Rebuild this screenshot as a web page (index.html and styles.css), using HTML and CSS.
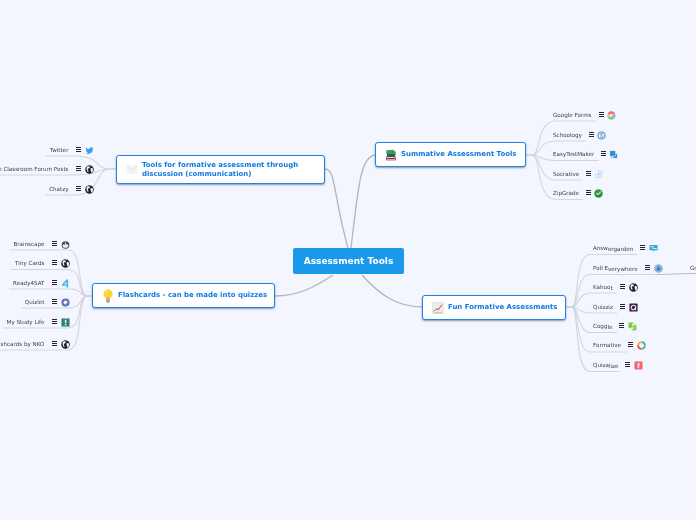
FILE: index.html
```html
<!DOCTYPE html>
<html lang="en">
<head>
<meta charset="utf-8">
<title>Assessment Tools</title>
<link rel="stylesheet" href="styles.css">
</head>
<body>
<svg class="defs" width="0" height="0" aria-hidden="true">
  <symbol id="i-globe" viewBox="0 0 20 20">
    <circle cx="10" cy="10" r="9.500" fill="#1d1d22"/>
    <path d="M5 3c3-1 5 0 6 1l-1 3-3 1-1 3 2 2-1 3-2-2-2-5zM12 8l4-2 2 4-1 5-3 2-1-4zM11 1l3 1-2 1z" fill="#f2f2f2"/>
  </symbol>
  <symbol id="i-twitter" viewBox="0 0 20 20">
    <path d="M19 4.500c-.7.3-1.400.5-2.100.6.8-.5 1.300-1.200 1.600-2-.7.4-1.500.7-2.300.9A3.700 3.700 0 0 0 9.900 7.300C6.900 7.200 4.200 5.700 2.400 3.500c-1 1.700-.5 3.800 1.100 4.900-.6 0-1.200-.2-1.700-.5 0 1.800 1.300 3.300 3 3.700-.5.100-1.100.200-1.700.100.500 1.500 1.900 2.500 3.500 2.600A7.500 7.500 0 0 1 1 15.800 10.600 10.600 0 0 0 17.300 6.400c.7-.5 1.300-1.100 1.700-1.900z" fill="#2aa3ef"/>
  </symbol>
  <symbol id="i-brain" viewBox="0 0 20 20">
    <circle cx="10" cy="11" r="8.500" fill="#3d4450"/>
    <path d="M3 12l3-3 2 2 2-7 2 7 2-2 3 3-3 5H6z" fill="#e8eef5"/>
    <path d="M10 1l2 6h-4z" fill="#5cb4ea"/>
  </symbol>
  <symbol id="i-four" viewBox="0 0 20 20">
    <path d="M12 1h4v18h-4v-4H2v-3z" fill="#4cb6ea"/>
    <path d="M12 6l-5 6h5z" fill="#f3f6ff"/>
  </symbol>
  <symbol id="i-quizlet" viewBox="0 0 20 20">
    <circle cx="10" cy="10" r="9" fill="#5a70c4"/>
    <circle cx="10" cy="10" r="4.500" fill="#eef0fb"/>
    <path d="M11 12l5 5 2-2-4-4z" fill="#5a70c4"/>
  </symbol>
  <symbol id="i-study" viewBox="0 0 20 20">
    <rect x="1" y="1" width="18" height="18" fill="#27886e"/>
    <rect x="8.500" y="4" width="3.500" height="7" fill="#f4f4ea"/>
    <rect x="8.500" y="13" width="3.500" height="3.500" fill="#f4f4ea"/>
  </symbol>
  <symbol id="i-google" viewBox="0 0 20 20">
    <g fill="none" stroke-width="5">
      <circle cx="10" cy="10" r="6.500" stroke="#eeb0a8"/>
      <path d="M4 7a6.500 6.500 0 0 1 11-1.500" stroke="#ea6f60"/>
      <path d="M4 7a6.500 6.500 0 0 0 0 6" stroke="#f5cc5e"/>
      <path d="M4 13a6.500 6.500 0 0 0 10 2" stroke="#7cc48a"/>
      <path d="M14 15a6.500 6.500 0 0 0 2.500-5H10" stroke="#96b9f0"/>
    </g>
  </symbol>
  <symbol id="i-school" viewBox="0 0 20 20">
    <circle cx="10" cy="10" r="9" fill="#3f9ee0"/>
    <circle cx="10" cy="10" r="6.500" fill="#e9f1fa"/>
    <path d="M13 7c-1-1.500-5-1.500-5.500.5S13 10.500 12.500 12.500 8 14.500 7 13" fill="none" stroke="#5a6b7c" stroke-width="1.800"/>
  </symbol>
  <symbol id="i-easy" viewBox="0 0 20 20">
    <rect x="2" y="2" width="12" height="11" fill="#2d8fd5"/>
    <rect x="10" y="9" width="8" height="9" fill="#2d8fd5"/>
    <rect x="12" y="11" width="3" height="3" fill="#dcecf9"/>
    <rect x="4" y="14" width="4" height="4" fill="#79bde9"/>
  </symbol>
  <symbol id="i-socrative" viewBox="0 0 20 20">
    <g fill="none" stroke="#a5cdef" stroke-width="1.500">
      <rect x="3" y="9" width="7" height="8" rx="2"/>
      <rect x="10" y="9" width="7" height="8" rx="2"/>
      <rect x="9" y="2" width="8" height="7" rx="2"/>
    </g>
  </symbol>
  <symbol id="i-zip" viewBox="0 0 20 20">
    <circle cx="10" cy="10" r="9.500" fill="#2e9d3a"/>
    <path d="M3 14a9 9 0 0 0 14 0z" fill="#1f6f2a" opacity=".55"/>
    <path d="M5 10l4 4 7-8-1.500-1L9 11 6.500 8.500z" fill="#f3fbf3"/>
  </symbol>
  <symbol id="i-answer" viewBox="0 0 20 20">
    <path d="M1 2h18v12H12l-3 4v-4H1z" fill="#3da3d8"/>
    <path d="M3 5h8v2H3zM8 9h9v2H8z" fill="#d7effa"/>
  </symbol>
  <symbol id="i-poll" viewBox="0 0 20 20">
    <circle cx="10" cy="10" r="9.500" fill="#8fb3e0"/>
    <path d="M10 4l5 10H5z" fill="#3a76c0"/>
  </symbol>
  <symbol id="i-quizziz" viewBox="0 0 20 20">
    <rect x="1" y="1" width="18" height="18" rx="1.500" fill="#3a1d4a"/>
    <circle cx="10" cy="10" r="5" fill="none" stroke="#e8e0ec" stroke-width="2.500"/>
    <path d="M11 11l5 5" stroke="#e8e0ec" stroke-width="2"/>
  </symbol>
  <symbol id="i-coggle" viewBox="0 0 20 20">
    <rect x="1" y="1" width="18" height="18" fill="#f1f8ea"/>
    <path d="M1 1h12L8 6l3 3-6 6-4-3z" fill="#7ec850"/>
    <path d="M19 19H7l5-5-3-3 6-6 4 3z" fill="#8ed25f"/>
  </symbol>
  <symbol id="i-formative" viewBox="0 0 20 20">
    <circle cx="10" cy="10" r="7.500" fill="none" stroke="#e4553f" stroke-width="4" stroke-dasharray="12 36" stroke-dashoffset="36"/>
    <circle cx="10" cy="10" r="7.500" fill="none" stroke="#f2b233" stroke-width="4" stroke-dasharray="12 36" stroke-dashoffset="24"/>
    <circle cx="10" cy="10" r="7.500" fill="none" stroke="#3f9fd8" stroke-width="4" stroke-dasharray="12 36" stroke-dashoffset="12"/>
    <circle cx="10" cy="10" r="7.500" fill="none" stroke="#58b368" stroke-width="4" stroke-dasharray="12 36"/>
  </symbol>
  <symbol id="i-quizalize" viewBox="0 0 20 20">
    <rect x="1" y="1" width="18" height="18" rx="1" fill="#f4646a"/>
    <path d="M8 5h5v3h-2v2h2v2h-2v4H8z" fill="#fbe3e3"/>
  </symbol>
</svg>

<main class="canvas">
  <svg class="links" width="696" height="520" viewBox="0 0 696 520" aria-hidden="true">
    <g class="main-links">
      <path d="M325 169C336 169 333 195 348 248"/>
      <path d="M351 248C358 190 360 155 376 155"/>
      <path d="M333 275C315 287 298 296 275 296"/>
      <path d="M362 275C380 295 397 307 423 307"/>
    </g>
    <g class="sub-links">
      <path d="M526 155H532C541 155 536 121 556 121H596"/>
      <path d="M526 155H532C541 155 538 141 556 141H586"/>
      <path d="M526 155H532C541 155 538 160.500 556 160.500H599"/>
      <path d="M526 155H532C541 155 538 180 556 180H583"/>
      <path d="M526 155H532C541 155 536 199.500 556 199.500H583"/>

      <path d="M566 307H572C579 307 574 254.500 590 254.500H637"/>
      <path d="M566 307H572C579 307 576 274.500 590 274.500H655"/>
      <path d="M566 307H572C579 307 578 293 590 293H617"/>
      <path d="M566 307H572C579 307 578 313 590 313H617"/>
      <path d="M566 307H572C579 307 578 332.500 590 332.500H617"/>
      <path d="M566 307H572C579 307 576 352 590 352H627"/>
      <path d="M566 307H572C579 307 574 371.500 590 371.500H620"/>

      <path d="M116 169H110C94 169 102 156 74 156H45"/>
      <path d="M116 169H110C94 169 100 175 74 175H0"/>
      <path d="M116 169H110C94 169 102 195 74 195H45"/>

      <path d="M92 296H88C76 296 84 250 68 250H10"/>
      <path d="M92 296H88C76 296 84 269.500 68 269.500H11"/>
      <path d="M92 296H88C78 296 84 289 68 289H9"/>
      <path d="M92 296H88C78 296 84 308 68 308H21"/>
      <path d="M92 296H88C76 296 84 328 68 328H3"/>
      <path d="M92 296H88C76 296 84 350 68 350H0"/>
    </g>
    <path class="far-link" d="M655 274.500C670 274.500 675 273.500 696 273.500"/>
  </svg>

  <h1 class="node root">Assessment Tools</h1>

  <div class="node topic topic-tools">
    <svg class="topic-icon" viewBox="0 0 20 16"><rect width="20" height="16" fill="#f4f4f2"/><path d="M0 0l10 9 10-9v2L10 11 0 2z" fill="#e4e4e2"/></svg>
    <span>Tools for formative assessment through discussion (communication)</span>
  </div>
  <div class="node topic topic-flash">
    <svg class="topic-icon" viewBox="0 0 16 20"><circle cx="8" cy="7" r="6.500" fill="#fbd436"/><path d="M4 3a5 5 0 0 1 5-1.500C6 2 5 4 4.500 6z" fill="#fff5b5"/><path d="M5 12h6v3H5z" fill="#f2b21f"/><path d="M5.500 15h5v3l-1 1.500h-3l-1-1.500z" fill="#9aa0a6"/></svg>
    <span>Flashcards - can be made into quizzes</span>
  </div>
  <div class="node topic topic-sum">
    <svg class="topic-icon" viewBox="0 0 18 18"><path d="M2 11h14v6H2z" fill="#8a2b3a"/><path d="M3 12h12v1.500H3zM3 15h12v1H3z" fill="#e8d9cf"/><path d="M3 7h12v5H3z" fill="#3d4f8a"/><path d="M2 2l10-1 4 3v4H5L2 6z" fill="#3aa04a"/><path d="M2 6l3 2h11v1H5L2 7z" fill="#1d6a38"/></svg>
    <span>Summative Assessment Tools</span>
  </div>
  <div class="node topic topic-fun">
    <svg class="topic-icon" viewBox="0 0 18 18"><rect x=".5" y=".5" width="17" height="17" rx="1.500" fill="#ececec" stroke="#d8d8d8"/><path d="M3 14l4-4 2 2 6-8" fill="none" stroke="#c8453c" stroke-width="1.500"/><path d="M3 16h12" stroke="#aaa"/></svg>
    <span>Fun Formative Assessments</span>
  </div>

  <div class="leaf l-twitter left-tools"><span class="txt">Twitter</span><i class="menu"></i><svg class="ico"><use href="#i-twitter"/></svg></div>
  <div class="leaf l-classroom left-tools"><span class="txt">Google Classroom Forum Posts</span><i class="menu"></i><svg class="ico"><use href="#i-globe"/></svg></div>
  <div class="leaf l-chatzy left-tools"><span class="txt">Chatzy</span><i class="menu"></i><svg class="ico"><use href="#i-globe"/></svg></div>

  <div class="leaf l-brain left-flash"><span class="txt">Brainscape</span><i class="menu"></i><svg class="ico"><use href="#i-brain"/></svg></div>
  <div class="leaf l-tiny left-flash"><span class="txt">Tiny Cards</span><i class="menu"></i><svg class="ico"><use href="#i-globe"/></svg></div>
  <div class="leaf l-ready left-flash"><span class="txt">Ready4SAT</span><i class="menu"></i><svg class="ico"><use href="#i-four"/></svg></div>
  <div class="leaf l-quizlet left-flash"><span class="txt">Quizlet</span><i class="menu"></i><svg class="ico"><use href="#i-quizlet"/></svg></div>
  <div class="leaf l-study left-flash"><span class="txt">My Study Life</span><i class="menu"></i><svg class="ico"><use href="#i-study"/></svg></div>
  <div class="leaf l-nko left-flash"><span class="txt">Flashcards by NKO</span><i class="menu"></i><svg class="ico"><use href="#i-globe"/></svg></div>

  <div class="leaf l-gforms"><span class="txt">Google Forms</span><i class="menu"></i><svg class="ico"><use href="#i-google"/></svg></div>
  <div class="leaf l-schoology"><span class="txt">Schoology</span><i class="menu"></i><svg class="ico"><use href="#i-school"/></svg></div>
  <div class="leaf l-easy"><span class="txt">EasyTestMaker</span><i class="menu"></i><svg class="ico"><use href="#i-easy"/></svg></div>
  <div class="leaf l-socrative"><span class="txt">Socrative</span><i class="menu"></i><svg class="ico"><use href="#i-socrative"/></svg></div>
  <div class="leaf l-zip"><span class="txt">ZipGrade</span><i class="menu"></i><svg class="ico"><use href="#i-zip"/></svg></div>

  <div class="leaf l-answer"><span class="txt">Answ<b class="low">ergarden</b></span><i class="menu"></i><svg class="ico"><use href="#i-answer"/></svg></div>
  <div class="leaf l-poll"><span class="txt">Poll E<b class="low">verywhere</b></span><i class="menu"></i><svg class="ico"><use href="#i-poll"/></svg></div>
  <div class="leaf l-kahoot"><span class="txt">Kahoo<b class="low">t</b></span><i class="menu"></i><svg class="ico"><use href="#i-globe"/></svg></div>
  <div class="leaf l-quizziz"><span class="txt">Quizziz</span><i class="menu"></i><svg class="ico"><use href="#i-quizziz"/></svg></div>
  <div class="leaf l-coggle"><span class="txt">Cogg<b class="low">le</b></span><i class="menu"></i><svg class="ico"><use href="#i-coggle"/></svg></div>
  <div class="leaf l-formative"><span class="txt">Formative</span><i class="menu"></i><svg class="ico"><use href="#i-formative"/></svg></div>
  <div class="leaf l-quizalize"><span class="txt">Quiza<b class="low">lize</b></span><i class="menu"></i><svg class="ico"><use href="#i-quizalize"/></svg></div>

  <span class="far-text">Gr</span>
</main>
</body>
</html>
```

FILE: styles.css
```css
html, body { margin: 0; padding: 0; background: #f3f6ff; }
body { width: 696px; height: 520px; overflow: hidden; font-family: "DejaVu Sans", "Liberation Sans", sans-serif; }
.defs { position: absolute; }

.canvas { position: relative; width: 696px; height: 520px; overflow: hidden; background: #f3f6ff; filter: blur(.3px); }
.links { position: absolute; left: 0; top: 0; }
.links path { fill: none; }
.main-links path { stroke: #b1b4bc; stroke-width: 1.3; }
.sub-links path { stroke: #d2d5dd; stroke-width: 1.1; }
.far-link { stroke: #b9bcc4; stroke-width: 1; }

/* nodes */
.node { position: absolute; box-sizing: border-box; margin: 0; display: flex; align-items: center; }
.root { left: 293px; top: 248px; width: 111px; height: 26px; justify-content: center; background: #1a99ea; border-radius: 2px; color: #fff; font-size: 9px; font-weight: bold; }
.topic { background: #fff; border: 1.500px solid #1f84e8; border-radius: 3px; box-shadow: 0 1px 2px rgba(40, 50, 80, .5); color: #0f78e4; font-size: 6.950px; font-weight: bold; line-height: 8.500px; }
.topic-icon { flex: none; }
.topic-tools { left: 116px; top: 155px; width: 209px; height: 29px; padding-left: 9px; }
.topic-tools .topic-icon { width: 12px; height: 9px; margin-right: 4px; }
.topic-flash { left: 92px; top: 283px; width: 183px; height: 25px; padding-left: 9px; white-space: nowrap; }
.topic-flash .topic-icon { width: 12px; height: 14px; margin-right: 4px; }
.topic-sum { left: 375px; top: 142px; width: 151px; height: 25px; padding-left: 9px; white-space: nowrap; }
.topic-sum .topic-icon { width: 12px; height: 12px; margin-right: 4px; }
.topic-fun { left: 422px; top: 295px; width: 144px; height: 25px; padding-left: 9px; white-space: nowrap; }
.topic-fun .topic-icon { width: 12px; height: 12px; margin-right: 4px; }

/* leaves */
.leaf { position: absolute; height: 10px; display: flex; align-items: center; color: #3a3d46; font-size: 5.600px; line-height: 10px; white-space: nowrap; }
.txt { display: block; width: var(--tw); flex: none; }
.low { font-weight: normal; vertical-align: -1px; }
.menu { display: block; flex: none; width: 5px; height: 5px; margin-bottom: 2px; background: repeating-linear-gradient(#26272c 0 1px, transparent 1px 2px); }
.ico { flex: none; width: 9px; height: 9px; margin: 0 .5px 0 3.500px; }

.left-tools, .left-flash { justify-content: flex-end; }
.left-tools { right: 602px; }
.left-flash { right: 626px; }
.left-tools .txt, .left-flash .txt { width: auto; text-align: right; margin-right: 7.500px; }

.l-twitter { top: 145px; }
.l-classroom { top: 164px; }
.l-chatzy { top: 184px; }
.l-brain { top: 239px; }
.l-tiny { top: 258px; }
.l-ready { top: 278px; }
.l-quizlet { top: 297px; }
.l-study { top: 317px; }
.l-nko { top: 339px; }

.l-gforms { left: 553px; top: 110px; --tw: 45.500px; }
.l-schoology { left: 553px; top: 130px; --tw: 35.500px; }
.l-easy { left: 553px; top: 149px; --tw: 47.500px; }
.l-socrative { left: 553px; top: 169px; --tw: 32.500px; }
.l-zip { left: 553px; top: 188px; --tw: 32.500px; }

.l-answer { left: 593px; top: 243px; --tw: 47px; }
.l-poll { left: 593px; top: 263px; --tw: 52px; }
.l-kahoot { left: 593px; top: 282px; --tw: 27px; }
.l-quizziz { left: 593px; top: 302px; --tw: 27px; }
.l-coggle { left: 593px; top: 321px; --tw: 26px; }
.l-formative { left: 593px; top: 340px; --tw: 35px; }
.l-quizalize { left: 593px; top: 360px; --tw: 32px; }

.far-text { position: absolute; left: 690px; top: 263px; color: #3a3d46; font-size: 5.600px; line-height: 10px; }
```
